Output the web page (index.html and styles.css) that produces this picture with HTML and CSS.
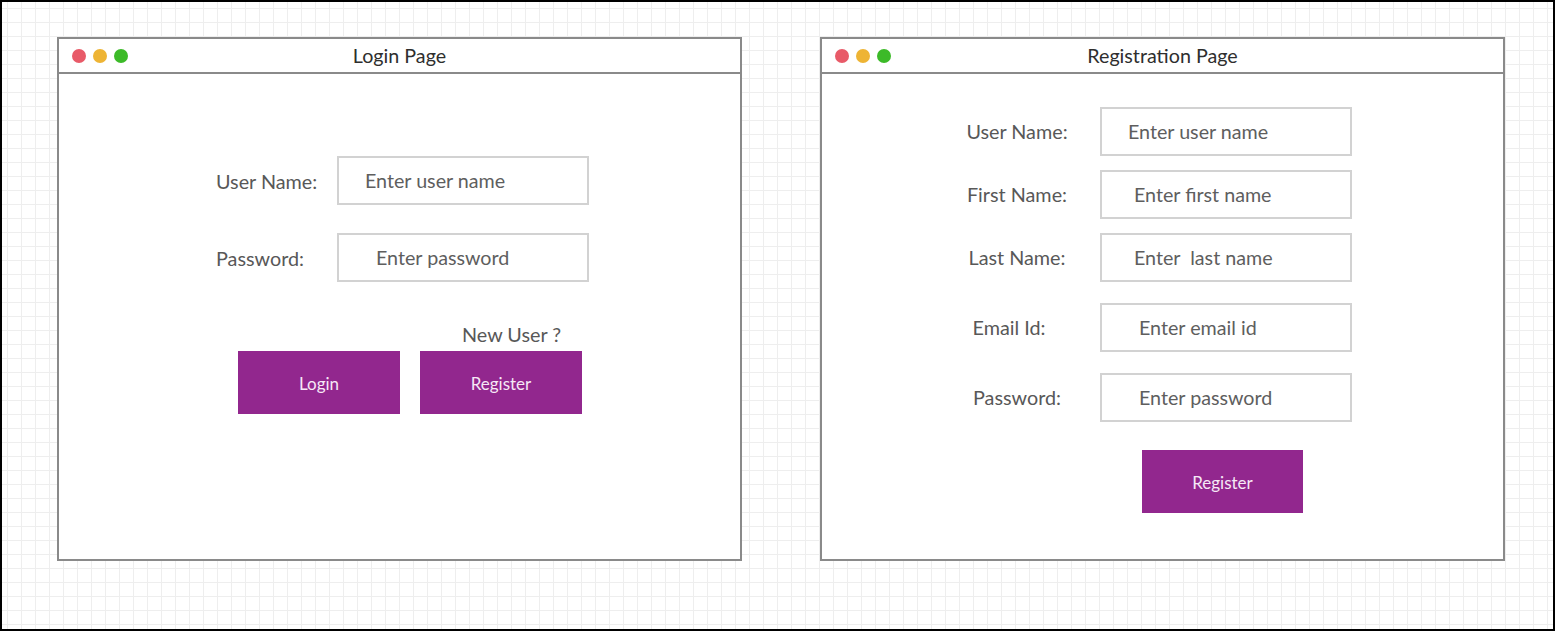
FILE: index.html
```html
<!DOCTYPE html>
<html lang="en">
<head>
<meta charset="utf-8">
<title>Login and Registration Mockup</title>
<link rel="stylesheet" href="styles.css">
</head>
<body>
<div class="canvas">
  <div class="window">
    <div class="titlebar">
      <div class="dots"><span class="dot red"></span><span class="dot yellow"></span><span class="dot green"></span></div>
      <div class="title">Login Page</div>
      <div></div>
    </div>
    <div class="body login-body">
      <div class="form login-form">
        <div class="row">
          <div class="label">User Name:</div>
          <div class="input pad-29">Enter user name</div>
        </div>
        <div class="row">
          <div class="label">Password:</div>
          <div class="input pad-39">Enter password</div>
        </div>
      </div>
      <div class="actions">
        <div class="new-user">New User ?</div>
        <div class="buttons">
          <div class="btn">Login</div>
          <div class="btn">Register</div>
        </div>
      </div>
    </div>
  </div>
  <div class="window">
    <div class="titlebar">
      <div class="dots"><span class="dot red"></span><span class="dot yellow"></span><span class="dot green"></span></div>
      <div class="title">Registration Page</div>
      <div></div>
    </div>
    <div class="body reg-body">
      <div class="form reg-form">
        <div class="row">
          <div class="label center">User Name:</div>
          <div class="input pad-29">Enter user name</div>
        </div>
        <div class="row">
          <div class="label center">First Name:</div>
          <div class="input pad-34">Enter first name</div>
        </div>
        <div class="row">
          <div class="label center">Last Name:</div>
          <div class="input pad-34">Enter &nbsp;last name</div>
        </div>
        <div class="row gap-top">
          <div class="label center shift-left">Email Id:</div>
          <div class="input pad-39">Enter email id</div>
        </div>
        <div class="row gap-top">
          <div class="label center">Password:</div>
          <div class="input pad-39">Enter password</div>
        </div>
      </div>
      <div class="reg-actions">
        <div class="btn">Register</div>
      </div>
    </div>
  </div>
</div>
</body>
</html>
```
FILE: styles.css
```css
html, body {
  margin: 0;
  padding: 0;
  background: #fff;
}

.canvas {
  box-sizing: border-box;
  width: 1555px;
  height: 631px;
  border: 2px solid #000;
  background-color: #fff;
  background-image:
    linear-gradient(to right, #eeeeee 1px, transparent 1px),
    linear-gradient(to bottom, #eeeeee 1px, transparent 1px);
  background-size: 14px 14px, 14px 14px;
  background-position: 5px 0, 0 6px;
  padding: 35px 0 0 55px;
  display: flex;
  gap: 78px;
  align-items: flex-start;
  font-family: Lato, "Open Sans", "Liberation Sans", sans-serif;
}

.window {
  box-sizing: border-box;
  width: 685px;
  height: 524px;
  border: 2px solid #8a8a8a;
  background: #fff;
  display: flex;
  flex-direction: column;
}

.titlebar {
  height: 33px;
  border-bottom: 2px solid #8a8a8a;
  display: grid;
  grid-template-columns: 1fr auto 1fr;
  align-items: center;
}

.dots {
  display: flex;
  gap: 7px;
  padding-left: 13px;
}

.dot {
  width: 14px;
  height: 14px;
  border-radius: 50%;
  display: block;
}
.dot.red { background: #e85a68; }
.dot.yellow { background: #eeb434; }
.dot.green { background: #3cba28; }

.title {
  font-size: 19.7px;
  color: #2e2e2e;
  line-height: 22px;
}

.body {
  flex: 1;
  display: flex;
  flex-direction: column;
}

.login-body {
  padding: 82px 0 0 157px;
}

.reg-body {
  padding: 33px 0 0 140px;
}

.form {
  display: flex;
  flex-direction: column;
}

.login-form { gap: 28px; }
.reg-form { gap: 14px; }
.reg-form .gap-top { margin-top: 7px; }

.row {
  display: flex;
  align-items: center;
}

.label {
  font-size: 19.8px;
  color: #585858;
  width: 121px;
  line-height: 24px;
  padding-top: 1px;
}

.label.center {
  width: 110px;
  margin-right: 28px;
  text-align: center;
  padding-top: 0;
  padding-bottom: 1px;
}

.label.center.shift-left {
  box-sizing: border-box;
  padding-right: 16px;
}

.input {
  box-sizing: border-box;
  width: 252px;
  height: 49px;
  border: 2px solid #d2d2d2;
  font-size: 19.7px;
  color: #5e5e5e;
  display: flex;
  align-items: center;
  padding-bottom: 1px;
}

.pad-29 { padding-left: 26px; }
.pad-34 { padding-left: 32px; }
.pad-39 { padding-left: 37px; }

.actions {
  margin-left: 22px;
  margin-top: 41px;
  display: flex;
  flex-direction: column;
}

.new-user {
  font-size: 19.8px;
  color: #585858;
  line-height: 23px;
  margin-left: 224px;
  margin-bottom: 5px;
}

.buttons {
  display: flex;
  gap: 20px;
}

.btn {
  box-sizing: border-box;
  width: 162px;
  height: 63px;
  background: #92278e;
  color: #f6e8f6;
  font-size: 17px;
  display: flex;
  align-items: center;
  justify-content: center;
  padding-top: 2px;
}

.reg-actions {
  margin-top: 28px;
  margin-left: 180px;
  display: flex;
}

.reg-actions .btn {
  width: 161px;
}
```
